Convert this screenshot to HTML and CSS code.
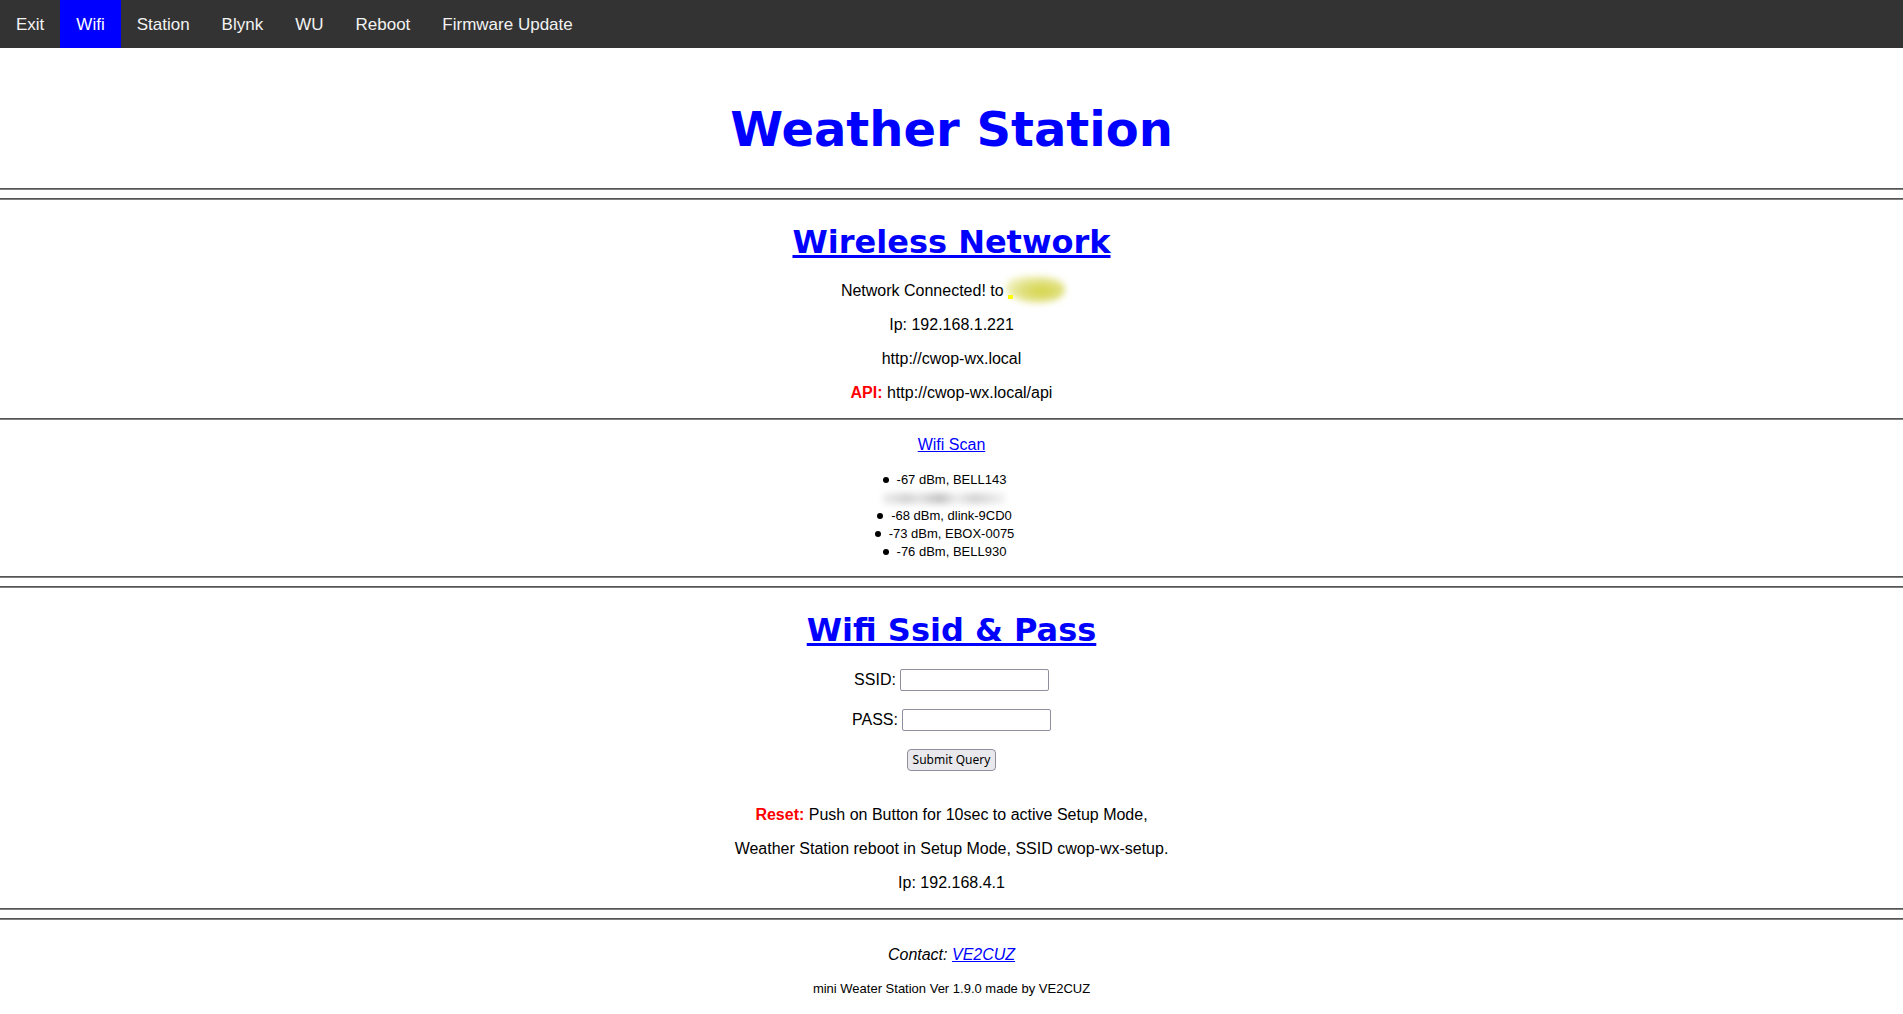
FILE: index.html
```html
<!DOCTYPE html>
<html lang="en">
<head>
<meta charset="utf-8">
<meta name="viewport" content="width=device-width, initial-scale=1">
<title>Weather Station</title>
<link rel="stylesheet" href="styles.css">
</head>
<body>
<nav class="topnav">
  <a href="#exit">Exit</a>
  <a class="active" href="#wifi">Wifi</a>
  <a href="#station">Station</a>
  <a href="#blynk">Blynk</a>
  <a href="#wu">WU</a>
  <a href="#reboot">Reboot</a>
  <a href="#update">Firmware Update</a>
</nav>
<main>
  <h1>Weather Station</h1>
  <hr><hr>
  <h2>Wireless Network</h2>
  <p>Network Connected! to <span class="hidden-name"></span></p>
  <p>Ip: 192.168.1.221</p>
  <p>http://cwop-wx.local</p>
  <p><b class="red">API:</b> http://cwop-wx.local/api</p>
  <hr>
  <p><a href="#scan">Wifi Scan</a></p>
  <ul class="scan">
    <li>-67 dBm, BELL143</li>
    <li class="hidden-row"><span class="smudge"></span></li>
    <li>-68 dBm, dlink-9CD0</li>
    <li>-73 dBm, EBOX-0075</li>
    <li>-76 dBm, BELL930</li>
  </ul>
  <hr><hr>
  <h2>Wifi Ssid &amp; Pass</h2>
  <form>
    <div class="field"><label for="ssid">SSID:</label><input type="text" id="ssid" name="ssid"></div>
    <div class="field"><label for="pass">PASS:</label><input type="text" id="pass" name="pass"></div>
    <button type="submit">Submit Query</button>
  </form>
  <p><b class="red">Reset:</b> Push on Button for 10sec to active Setup Mode,</p>
  <p>Weather Station reboot in Setup Mode, SSID cwop-wx-setup.</p>
  <p>Ip: 192.168.4.1</p>
  <hr><hr>
</main>
<footer>
  <p><i>Contact: <a href="#contact">VE2CUZ</a></i></p>
  <p class="small">mini Weater Station Ver 1.9.0 made by VE2CUZ</p>
</footer>
</body>
</html>
```
FILE: styles.css
```css
body {
  margin: 0;
  background: #fff;
  color: #000;
  font: 16px/20px "Liberation Sans", Arial, sans-serif;
  text-align: center;
}
.topnav {
  display: flex;
  background: #333;
}
.topnav a {
  padding: 15px 16px 13px;
  color: #f2f2f2;
  font-size: 17px;
  line-height: 20px;
  text-decoration: none;
}
.topnav .active {
  background: #00f;
  color: #fff;
}
h1, h2 {
  color: #00f;
  font-family: Verdana, "DejaVu Sans", sans-serif;
  font-weight: bold;
}
h1 {
  margin: 52px 0 30px;
  font-size: 48px;
  line-height: 58px;
}
h2 {
  margin: 23px 0 20px;
  font-size: 32px;
  line-height: 38px;
  text-decoration: underline;
  text-decoration-thickness: 3px;
}
p { margin: 14px 0; }
a { color: #00f; }
.red { color: #f00; }
hr {
  height: 0;
  margin: 15px 0;
  border: 0;
  border-top: 1px solid #555;
  border-bottom: 1px solid #808080;
}
hr + hr { margin-top: -7px; }
.hidden-name {
  position: relative;
  display: inline-block;
  width: 54px;
  height: 12px;
}
.hidden-name::before {
  content: "";
  position: absolute;
  inset: -8px -3px -7px -2px;
  border-radius: 40% 50% 50% 60%;
  background: radial-gradient(ellipse at 60% 55%, #d4d444, #e0e080 40%, #f4f4cc 80%);
  filter: blur(3px);
}
.hidden-name::after {
  content: "";
  position: absolute;
  left: 0;
  bottom: -3px;
  width: 5px;
  height: 4px;
  background: #ff0;
}
.scan {
  margin: 16px 0 15px;
  padding: 0;
  list-style: none;
  font-size: 13px;
  line-height: 18px;
}
.scan li {
  display: flex;
  align-items: center;
  justify-content: center;
  height: 18px;
}
.scan li::before {
  content: "";
  width: 6px;
  height: 6px;
  margin: 0 8px 0 -14px;
  border-radius: 50%;
  background: #000;
}
.scan .hidden-row::before { display: none; }
.smudge {
  width: 124px;
  height: 11px;
  margin-right: 16px;
  border-radius: 5px;
  background: linear-gradient(90deg, #eee, #d4d4d4 20%, #e4e4e4 30%, #c4c4c4 47%, #eee 60%, #d4d4d4 75%, #f4f4f4);
  filter: blur(3px);
}
form {
  display: flex;
  flex-direction: column;
  align-items: center;
  gap: 18px;
  margin: 20px 0 34px;
}
.field {
  display: flex;
  align-items: center;
  gap: 4px;
}
input {
  box-sizing: border-box;
  width: 149px;
  height: 22px;
  border: 1px solid #8f8f9d;
  border-radius: 2px;
}
button {
  box-sizing: border-box;
  height: 22px;
  padding: 0 5px;
  border: 1px solid #8f8f9d;
  border-radius: 4px;
  background: #e9e9ed;
  color: #000;
  font: 12px/20px "Noto Sans", sans-serif;
}
footer p:first-child { margin-top: 25px; }
.small { font-size: 13px; }
```
